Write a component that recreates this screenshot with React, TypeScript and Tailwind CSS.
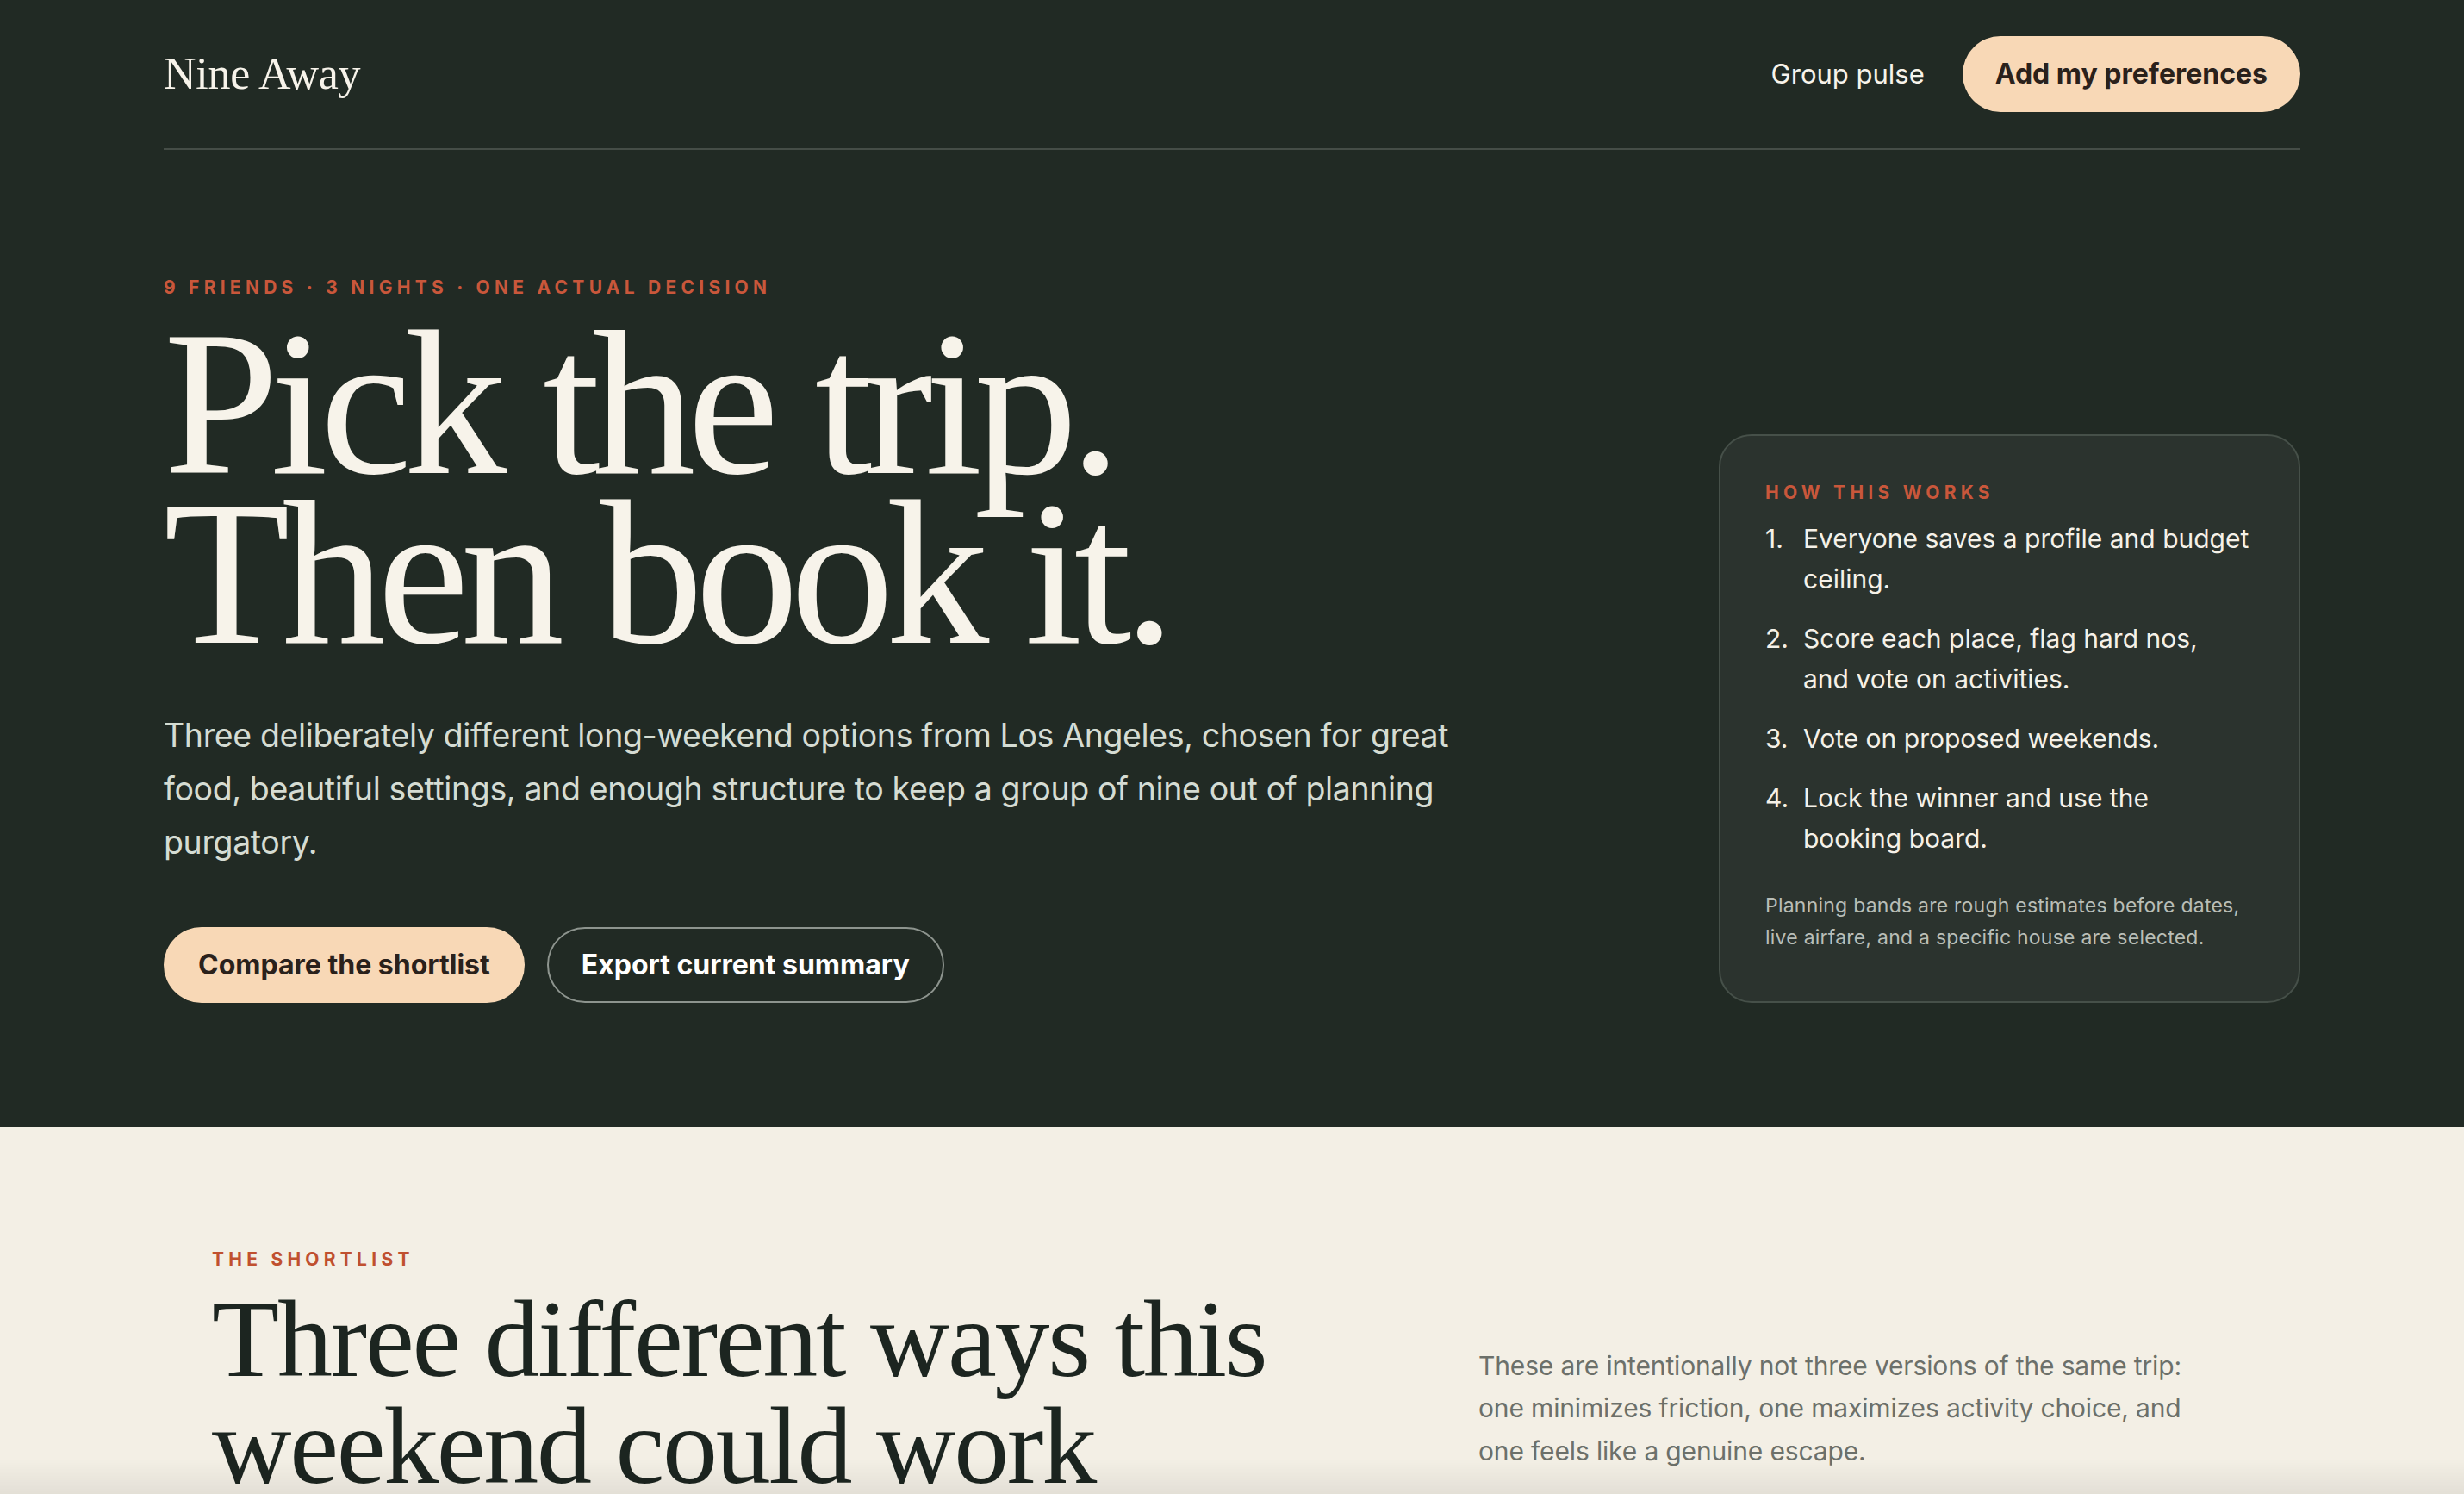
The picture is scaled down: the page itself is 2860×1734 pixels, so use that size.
import React from "react";

const serif = "font-['Liberation_Serif',_'Times_New_Roman',_serif]";
const sans = "font-['Inter',_'Liberation_Sans',_sans-serif]";

const steps: React.ReactNode[] = [
  <>Everyone saves a profile and budget<br />ceiling.</>,
  <>Score each place, flag hard nos,<br />and vote on activities.</>,
  <>Vote on proposed weekends.</>,
  <>Lock the winner and use the<br />booking board.</>,
];

const Header = () => (
  <header className="flex h-[174px] items-center justify-between border-b-2 border-[#454d47]">
    <a className={`${serif} text-[52px] tracking-[-0.005em] text-[#f7f3ea]`}>Nine Away</a>
    <nav className="flex items-center gap-[44px]">
      <a className="text-[31px] text-[#f7f3ea]">Group pulse</a>
      <button className="h-[88px] rounded-full bg-[#f8d8b6] px-[38px] text-[32px] font-bold text-[#2a211b]">
        Add my preferences
      </button>
    </nav>
  </header>
);

const HowItWorks = () => (
  <aside className="w-[675px] shrink-0 rounded-[38px] border-2 border-[#465049] bg-[#2b332e] px-[52px] pt-[52px] pb-[55px]">
    <p className="text-[21px] leading-[28px] font-bold tracking-[0.25em] text-[#c9573b]">HOW THIS WORKS</p>
    <ol className="mt-[16px] flex flex-col gap-[22px]">
      {steps.map((step, i) => (
        <li key={i} className="flex text-[30px] leading-[47px] text-[#f5f1e8]">
          <span className="w-[44px] shrink-0">{i + 1}.</span>
          <span>{step}</span>
        </li>
      ))}
    </ol>
    <p className="mt-[36px] text-[23px] leading-[37px] tracking-[0.01em] text-[#b9beb7]">
      Planning bands are rough estimates before dates, live airfare, and a specific house are selected.
    </p>
  </aside>
);

const Hero = () => (
  <section className="bg-[#212a24]">
    <div className="mx-auto w-[2480px]">
      <Header />
      <div className="flex items-end justify-between pt-[146px] pb-[144px]">
        <div>
          <p className="text-[21px] leading-[28px] font-bold tracking-[0.25em] text-[#c9573b]">
            9 FRIENDS · 3 NIGHTS · ONE ACTUAL DECISION
          </p>
          <h1 className={`${serif} mt-[22px] text-[240px] leading-[197px] tracking-[-0.039em] text-[#f7f3ea]`}>
            Pick the trip.
            <br />
            Then book it.
          </h1>
          <p className="mt-[59px] max-w-[1530px] text-[37.5px] leading-[62px] tracking-[-0.01em] text-[#d5dcd3]">
            Three deliberately different long-weekend options from Los Angeles, chosen for great food, beautiful
            settings, and enough structure to keep a group of nine out of planning purgatory.
          </p>
          <div className="mt-[67px] flex gap-[26px]">
            <button className="h-[88px] rounded-full bg-[#f8d8b6] px-[40px] text-[32px] font-bold text-[#2a211b]">
              Compare the shortlist
            </button>
            <button className="h-[88px] rounded-full border-2 border-[#8d948e] px-[38px] text-[32px] font-bold text-[#ffffff]">
              Export current summary
            </button>
          </div>
        </div>
        <HowItWorks />
      </div>
    </div>
  </section>
);

const Shortlist = () => (
  <section className="bg-[#f3efe5]">
    <div className="mx-auto grid w-[2368px] grid-cols-[1fr_898px] items-end pt-[140px]">
      <div>
        <p className="text-[21px] leading-[28px] font-bold tracking-[0.25em] text-[#c0502f]">THE SHORTLIST</p>
        <h2 className={`${serif} mt-[16px] text-[128px] leading-[124px] tracking-[-0.018em] text-[#1c2520]`}>
          Three different ways this
          <br />
          weekend could work
        </h2>
      </div>
      <p className="mb-[31px] max-w-[870px] text-[30px] leading-[49.5px] tracking-[-0.005em] text-[#6c706a]">
        These are intentionally not three versions of the same trip: one minimizes friction, one maximizes activity
        choice, and one feels like a genuine escape.
      </p>
    </div>
    <div className="h-[200px]" />
  </section>
);

export default function App() {
  return (
    <div className={`${sans} min-h-screen bg-[#f3efe5] antialiased`}>
      <Hero />
      <Shortlist />
      <div className="pointer-events-none fixed inset-x-0 bottom-0 h-[40px] bg-gradient-to-t from-[#00000010] to-transparent" />
    </div>
  );
}
